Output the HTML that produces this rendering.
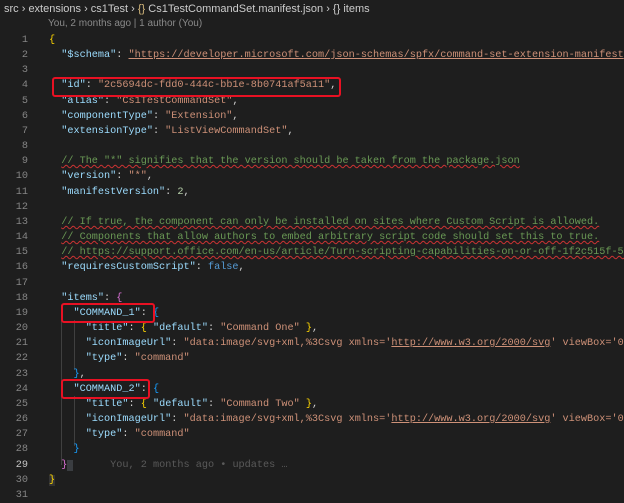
<!DOCTYPE html><html><head><style>
body{margin:0;width:624px;height:500px;background:#1e1e1e;overflow:hidden;position:relative;font-family:"Liberation Mono",monospace;font-size:10.2px}
.bc{position:absolute;left:4px;top:3px;font-family:"Liberation Sans",sans-serif;font-size:11px;color:#cccccc;white-space:nowrap}
.bl{position:absolute;left:48px;top:18px;font-family:"Liberation Sans",sans-serif;font-size:10px;color:#8a8a8a}
.l{position:absolute;left:0;height:15px;line-height:15px;white-space:pre;width:624px}
.n{position:absolute;right:596px;color:#858585;text-align:right}
.c{position:absolute;left:49px;color:#d4d4d4}
.k{color:#9cdcfe}.s{color:#ce9178}.u{color:#ce9178;text-decoration:underline}.m{color:#6a9955;text-decoration:underline wavy #c33;text-decoration-thickness:1px}
.num{color:#b5cea8}.b{color:#569cd6}.g{color:#ffd700}.p{color:#da70d6}.bb{color:#179fff}
.box{position:absolute;border:2px solid #e81123;border-radius:3px}
.ig{position:absolute;width:1px;background:#404040}
</style></head><body>
<div class="bc">src › extensions › cs1Test › <span style="color:#d7ba7d">{}</span> Cs1TestCommandSet.manifest.json › <span>{}</span> items</div>
<div class="bl">You, 2 months ago | 1 author (You)</div>
<div class="ig" style="left:61px;top:305px;height:160px"></div>
<div class="ig" style="left:74px;top:320px;height:50px"></div>
<div class="ig" style="left:74px;top:396px;height:50px"></div>
<div class="l" style="top:33px"><span class="n">1</span><span class="c"><span class="g">{</span></span></div>
<div class="l" style="top:48px"><span class="n">2</span><span class="c">  <span class="k">"$schema"</span>: <span class="u">"https://developer.microsoft.com/json-schemas/spfx/command-set-extension-manifest</span></span></div>
<div class="l" style="top:63px"><span class="n">3</span></div>
<div class="l" style="top:78px"><span class="n">4</span><span class="c">  <span class="k">"id"</span>: <span class="s">"2c5694dc-fdd0-444c-bb1e-8b0741af5a11"</span>,</span></div>
<div class="l" style="top:94px"><span class="n">5</span><span class="c">  <span class="k">"alias"</span>: <span class="s">"Cs1TestCommandSet"</span>,</span></div>
<div class="l" style="top:109px"><span class="n">6</span><span class="c">  <span class="k">"componentType"</span>: <span class="s">"Extension"</span>,</span></div>
<div class="l" style="top:124px"><span class="n">7</span><span class="c">  <span class="k">"extensionType"</span>: <span class="s">"ListViewCommandSet"</span>,</span></div>
<div class="l" style="top:139px"><span class="n">8</span></div>
<div class="l" style="top:154px"><span class="n">9</span><span class="c">  <span class="m">// The "*" signifies that the version should be taken from the package.json</span></span></div>
<div class="l" style="top:169px"><span class="n">10</span><span class="c">  <span class="k">"version"</span>: <span class="s">"*"</span>,</span></div>
<div class="l" style="top:185px"><span class="n">11</span><span class="c">  <span class="k">"manifestVersion"</span>: <span class="num">2</span>,</span></div>
<div class="l" style="top:200px"><span class="n">12</span></div>
<div class="l" style="top:215px"><span class="n">13</span><span class="c">  <span class="m">// If true, the component can only be installed on sites where Custom Script is allowed.</span></span></div>
<div class="l" style="top:230px"><span class="n">14</span><span class="c">  <span class="m">// Components that allow authors to embed arbitrary script code should set this to true.</span></span></div>
<div class="l" style="top:245px"><span class="n">15</span><span class="c">  <span class="m">// https://support.office.com/en-us/article/Turn-scripting-capabilities-on-or-off-1f2c515f-5d7e</span></span></div>
<div class="l" style="top:260px"><span class="n">16</span><span class="c">  <span class="k">"requiresCustomScript"</span>: <span class="b">false</span>,</span></div>
<div class="l" style="top:276px"><span class="n">17</span></div>
<div class="l" style="top:291px"><span class="n">18</span><span class="c">  <span class="k">"items"</span>: <span class="p">{</span></span></div>
<div class="l" style="top:306px"><span class="n">19</span><span class="c">    <span class="k">"COMMAND_1"</span>: <span class="bb">{</span></span></div>
<div class="l" style="top:321px"><span class="n">20</span><span class="c">      <span class="k">"title"</span>: <span class="g">{</span> <span class="k">"default"</span>: <span class="s">"Command One"</span> <span class="g">}</span>,</span></div>
<div class="l" style="top:336px"><span class="n">21</span><span class="c">      <span class="k">"iconImageUrl"</span>: <span class="s">"data:image/svg+xml,%3Csvg xmlns='<span class="u">http://www.w3.org/2000/svg</span>' viewBox='0</span></span></div>
<div class="l" style="top:351px"><span class="n">22</span><span class="c">      <span class="k">"type"</span>: <span class="s">"command"</span></span></div>
<div class="l" style="top:367px"><span class="n">23</span><span class="c">    <span class="bb">}</span>,</span></div>
<div class="l" style="top:382px"><span class="n">24</span><span class="c">    <span class="k">"COMMAND_2"</span>: <span class="bb">{</span></span></div>
<div class="l" style="top:397px"><span class="n">25</span><span class="c">      <span class="k">"title"</span>: <span class="g">{</span> <span class="k">"default"</span>: <span class="s">"Command Two"</span> <span class="g">}</span>,</span></div>
<div class="l" style="top:412px"><span class="n">26</span><span class="c">      <span class="k">"iconImageUrl"</span>: <span class="s">"data:image/svg+xml,%3Csvg xmlns='<span class="u">http://www.w3.org/2000/svg</span>' viewBox='0</span></span></div>
<div class="l" style="top:427px"><span class="n">27</span><span class="c">      <span class="k">"type"</span>: <span class="s">"command"</span></span></div>
<div class="l" style="top:442px"><span class="n">28</span><span class="c">    <span class="bb">}</span></span></div>
<div class="l" style="top:458px"><span class="n" style="color:#c6c6c6">29</span><span class="c">  <span class="p">}</span><span style="background:#3a3d41"> </span>      <span style="color:#5a5a5a">You, 2 months ago • updates …</span></span></div>
<div class="l" style="top:473px"><span class="n">30</span><span class="c"><span class="g" style="background:#333">}</span></span></div>
<div class="l" style="top:488px"><span class="n">31</span></div>
<div class="box" style="left:52px;top:77px;width:285px;height:16px"></div>
<div class="box" style="left:61px;top:303px;width:90px;height:16px"></div>
<div class="box" style="left:61px;top:379px;width:85px;height:16px"></div>
</body></html>
